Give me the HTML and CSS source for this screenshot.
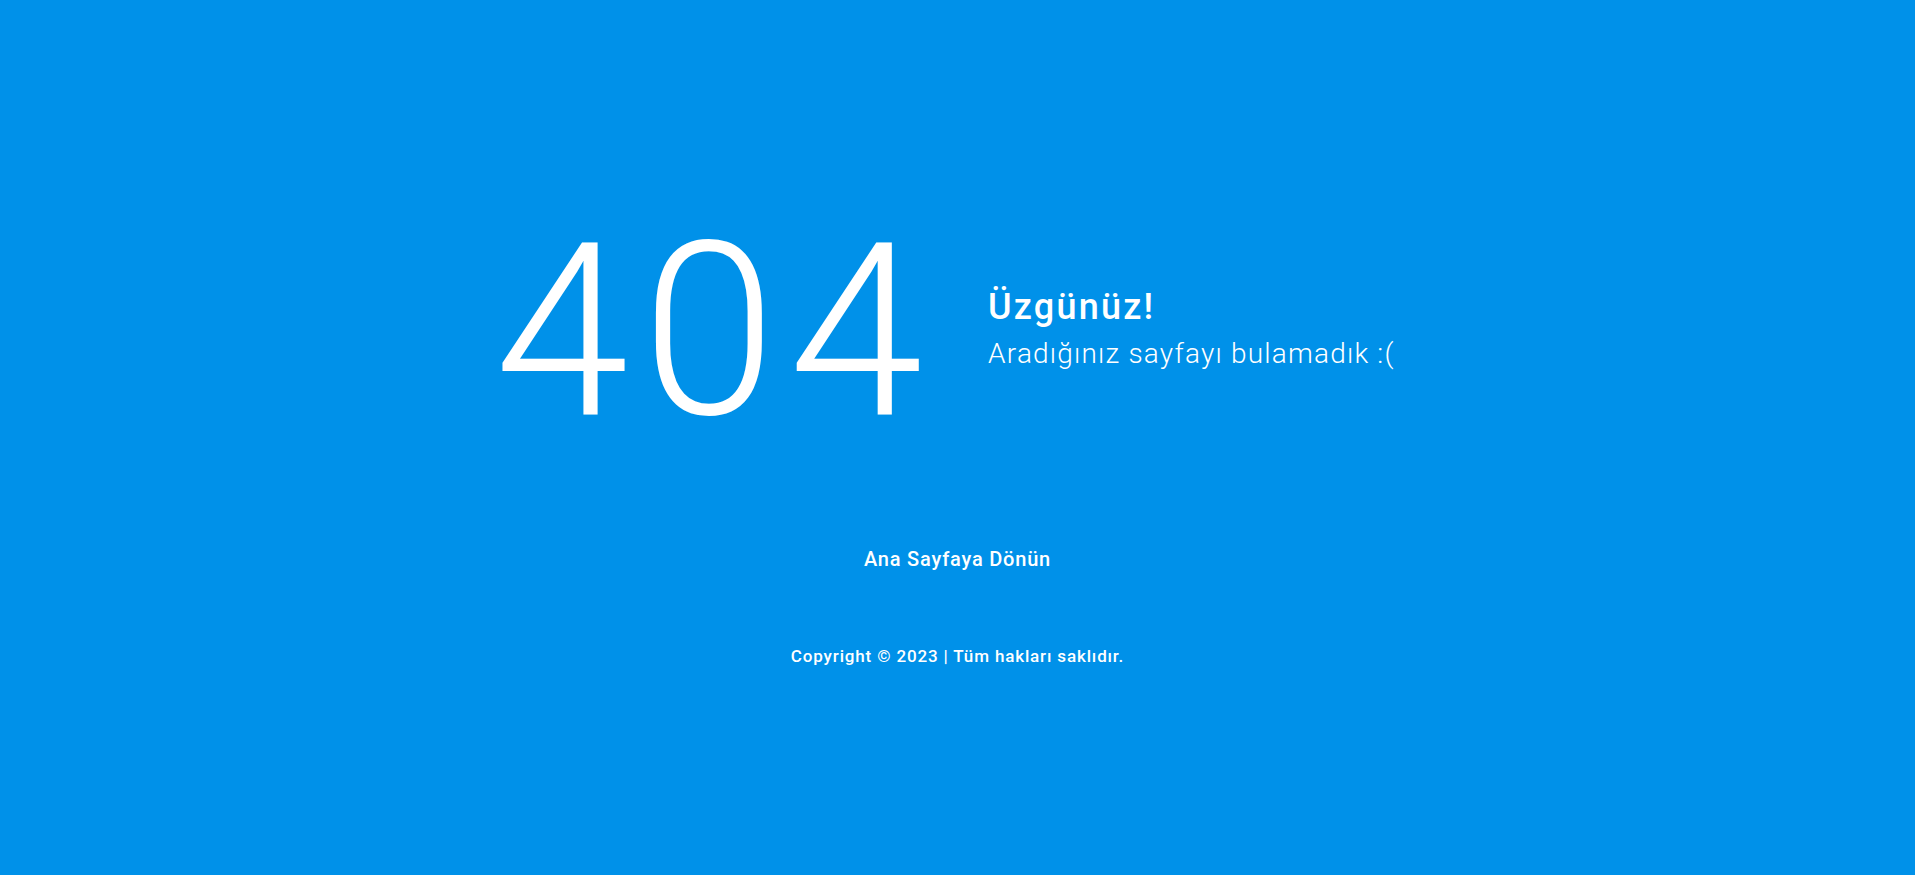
FILE: index.html
```html
<!DOCTYPE html>
<html lang="tr">
<head>
<meta charset="utf-8">
<title>404</title>
<link rel="stylesheet" href="styles.css">
</head>
<body>
<main class="page">
  <section class="hero">
    <div class="code">404</div>
    <div class="msg">
      <h1 class="title">Üzgünüz!</h1>
      <p class="text">Aradığınız sayfayı bulamadık :(</p>
    </div>
  </section>
  <a class="home" href="#">Ana Sayfaya Dönün</a>
  <footer class="copy">Copyright © 2023 | Tüm hakları saklıdır.</footer>
</main>
</body>
</html>
```
FILE: styles.css
```css
html, body {
  margin: 0;
  padding: 0;
}
body {
  background: #0091e9;
  color: #fff;
  font-family: Roboto, "Liberation Sans", sans-serif;
  min-height: 100vh;
}
.page {
  display: flex;
  flex-direction: column;
  align-items: center;
  padding-top: 210px;
}
.hero {
  display: flex;
  align-items: center;
  justify-content: center;
  gap: 52px;
  margin-left: -26px;
}
.code {
  font-size: 242px;
  font-weight: 300;
  line-height: 1;
  letter-spacing: 13px;
}
.msg {
  display: flex;
  flex-direction: column;
  gap: 7px;
  margin-top: -4px;
}
.title {
  margin: 0;
  font-size: 36px;
  font-weight: 500;
  line-height: 1.2;
  letter-spacing: 2.2px;
}
.text {
  margin: 0;
  font-size: 28px;
  font-weight: 300;
  line-height: 1.3;
  letter-spacing: 1.2px;
}
.home {
  margin-top: 95px;
  color: #fff;
  text-decoration: none;
  font-size: 20px;
  font-weight: 500;
  letter-spacing: 0.8px;
}
.copy {
  margin-top: 75px;
  font-size: 17px;
  font-weight: 500;
  letter-spacing: 0.85px;
}
```
